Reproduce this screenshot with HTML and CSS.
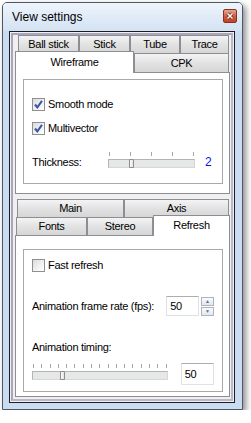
FILE: index.html
```html
<!DOCTYPE html>
<html lang="en">
<head>
    <meta charset="UTF-8">
    <title>View settings</title>
    <link rel="stylesheet" href="styles.css">
</head>
<body>
    <div class="window">
        <div class="titlebar">
            <span class="title">View settings</span>
            <span class="close">
                <svg width="14" height="14" viewBox="0 0 14 14">
                    <path d="M4.5 4.5 L9.5 9.5 M9.5 4.5 L4.5 9.5" stroke="#6b1c10" stroke-width="3"/>
                    <path d="M4.5 4.5 L9.5 9.5 M9.5 4.5 L4.5 9.5" stroke="#fff" stroke-width="1.6"/>
                </svg>
            </span>
        </div>
        <div class="client">
            <div class="inset">

                <!-- upper tab control -->
                <div class="tabctl">
                    <div class="tabrow back upper">
                        <div class="tab w-ball">Ball stick</div>
                        <div class="tab w-stick">Stick</div>
                        <div class="tab w-tube">Tube</div>
                        <div class="tab w-trace">Trace</div>
                    </div>
                    <div class="tabrow front upper">
                        <div class="tab selected w-wire">Wireframe</div>
                        <div class="tab w-cpk">CPK</div>
                    </div>
                    <div class="panel panel-top">
                        <div class="group group-top">
                            <div class="check-row first">
                                <span class="checkbox">
                                    <svg width="11" height="11" viewBox="0 0 11 11"><path d="M2 5.5 L4.3 8.3 L9 1.8" stroke="#3a55a5" stroke-width="2" fill="none"/></svg>
                                </span>
                                <span>Smooth mode</span>
                            </div>
                            <div class="check-row second">
                                <span class="checkbox">
                                    <svg width="11" height="11" viewBox="0 0 11 11"><path d="M2 5.5 L4.3 8.3 L9 1.8" stroke="#3a55a5" stroke-width="2" fill="none"/></svg>
                                </span>
                                <span>Multivector</span>
                            </div>
                            <div class="slider-row thick-row">
                                <span class="label thick-label">Thickness:</span>
                                <div class="slider thick-slider">
                                    <div class="ticks">
                                        <i></i><i></i><i></i><i></i><i></i>
                                    </div>
                                    <div class="track"><span class="thumb thumb-thick"></span></div>
                                </div>
                                <span class="value">2</span>
                            </div>
                        </div>
                    </div>
                </div>

                <!-- lower tab control -->
                <div class="tabctl lower-ctl">
                    <div class="tabrow back lower">
                        <div class="tab w-main">Main</div>
                        <div class="tab w-axis">Axis</div>
                    </div>
                    <div class="tabrow front lower">
                        <div class="tab w-fonts">Fonts</div>
                        <div class="tab w-stereo">Stereo</div>
                        <div class="tab selected w-refresh">Refresh</div>
                    </div>
                    <div class="panel panel-bottom">
                        <div class="group group-bottom">
                            <div class="check-row fast">
                                <span class="checkbox"></span>
                                <span>Fast refresh</span>
                            </div>
                            <div class="rate-row">
                                <span class="label rate-label">Animation frame rate (fps):</span>
                                <span class="textbox spin-box">50</span>
                                <span class="spin">
                                    <span class="spin-btn">&#9650;</span>
                                    <span class="spin-btn">&#9660;</span>
                                </span>
                            </div>
                            <div class="label timing-label">Animation timing:</div>
                            <div class="timing-row">
                                <div class="slider timing-slider">
                                    <div class="ticks">
                                        <i></i><i></i><i></i><i></i><i></i><i></i><i></i><i></i><i></i>
                                        <i></i><i></i><i></i><i></i><i></i><i></i><i></i><i></i>
                                    </div>
                                    <div class="track"><span class="thumb thumb-timing"></span></div>
                                </div>
                                <span class="textbox timing-box">50</span>
                            </div>
                        </div>
                    </div>
                </div>

            </div>
        </div>
    </div>
</body>
</html>
```

FILE: styles.css
```css
* {
    box-sizing: border-box;
}
body {
    margin: 0;
    background: #fff;
    font-family: "Liberation Sans", Arial, sans-serif;
    font-size: 11px;
    letter-spacing: -0.3px;
    color: #000;
}
.window {
    margin: 2px 0 0 2px;
    width: 241px;
    height: 408px;
    border: 1px solid #4c5866;
    border-radius: 5px 5px 0 0;
    background: #c9dcf2;
    box-shadow: 3px 3px 6px rgba(0, 0, 0, 0.45);
    display: flex;
    flex-direction: column;
}
.titlebar {
    height: 28px;
    padding: 0 5px 0 9px;
    display: flex;
    justify-content: space-between;
    border-radius: 4px 4px 0 0;
    background: linear-gradient(#eef4fb, #d3e2f3);
}
.title {
    font-size: 12px;
    letter-spacing: 0;
    line-height: 28px;
}
.close {
    margin-top: 6px;
    width: 14px;
    height: 14px;
    border: 1px solid #8a3020;
    border-radius: 2px;
    background: linear-gradient(#e8a590, #cf5a3e 55%, #c04428);
    display: flex;
}
.close svg {
    margin: -1px;
}
.client {
    flex: 1;
    margin: 0 7px 6px 6px;
    border: 1px solid #1e1e1e;
    background: #f0f0f0;
    padding: 1px;
}
.inset {
    height: 100%;
    border: 2px solid;
    border-color: #a8a5bd #bab7cc #bab7cc #a8a5bd;
    padding: 0 1px 2px 2px;
}

/* tabs */
.tabrow {
    display: flex;
}
.tabrow.back.upper {
    height: 18px;
    padding-left: 3px;
}
.tabrow.front.upper {
    height: 19px;
}
.tabrow.back.lower {
    height: 18px;
    padding-left: 2px;
}
.tabrow.front.lower {
    height: 18px;
    padding-left: 1px;
}
.tab {
    border: 1px solid #8c8e94;
    border-bottom: none;
    background: linear-gradient(#f4f4f4, #e2e2e2 50%, #d6d6d6);
    display: flex;
    align-items: center;
    justify-content: center;
    padding-bottom: 1px;
}
.tab.selected {
    position: relative;
    z-index: 1;
    background: #fff;
    margin-top: -2px;
    margin-bottom: -1px;
    padding-bottom: 2px;
}
.w-ball { width: 61px; }
.w-stick { width: 51px; }
.w-tube { width: 50px; }
.w-trace { width: 49px; }
.w-wire { width: 119px; }
.w-cpk { width: 95px; }
.w-main { width: 107px; }
.w-axis { width: 105px; }
.w-fonts { width: 71px; }
.w-stereo { width: 66px; }
.w-refresh { width: 77px; }

.panel {
    border: 1px solid #8c8e94;
    background: #fff;
}
.panel-top {
    height: 122px;
    padding: 6px 6px 0 7px;
}
.lower-ctl {
    margin-top: 5px;
}
.panel-bottom {
    height: 162px;
    padding: 13px 6px 0 7px;
}
.group {
    border: 1px solid #a9a9a9;
    padding: 0 8px;
}
.group-top {
    height: 105px;
}
.group-bottom {
    height: 143px;
}

/* checkboxes */
.check-row {
    display: flex;
    align-items: center;
    height: 14px;
    gap: 3px;
}
.check-row.first {
    margin-top: 17px;
}
.check-row.second {
    margin-top: 10px;
}
.check-row.fast {
    margin-top: 8px;
}
.checkbox {
    width: 13px;
    height: 13px;
    border: 1px solid #8f8f8f;
    background: linear-gradient(135deg, #dcdcdc, #f6f6f6 70%, #fff);
    display: flex;
    align-items: center;
    justify-content: center;
}

/* sliders */
.label {
    line-height: 12px;
}
.slider-row {
    display: flex;
    align-items: flex-end;
    margin-top: 17px;
}
.thick-label {
    width: 76px;
}
.slider {
    display: flex;
    flex-direction: column;
}
.ticks {
    display: flex;
    justify-content: space-between;
    height: 4px;
    margin-bottom: 3px;
    padding: 0 1px;
}
.ticks i {
    width: 1px;
    background: #a6a6a6;
}
.track {
    position: relative;
    height: 9px;
    border: 1px solid #b4b4b4;
    border-right-color: #d6d6d6;
    border-bottom-color: #d6d6d6;
    background: #e6e8e8;
}
.thumb {
    position: absolute;
    top: -1px;
    width: 5px;
    height: 9px;
    border: 1px solid #8c8c8c;
    border-radius: 1px 1px 0 0;
    background: linear-gradient(90deg, #fdfdfd, #e2e2e2);
}
.thick-slider {
    width: 87px;
}
.thumb-thick {
    left: 20px;
}
.value {
    margin-left: 10px;
    color: #0018e0;
    font-size: 12px;
    line-height: 12px;
}

/* numeric fields */
.rate-row {
    display: flex;
    align-items: center;
    margin-top: 24px;
    height: 20px;
}
.rate-label {
    width: 135px;
    padding-left: 0;
}
.textbox {
    border: 1px solid #dde2e8;
    border-top-color: #abadb3;
    background: #fff;
    padding-left: 3px;
    display: flex;
    align-items: center;
}
.spin-box {
    width: 33px;
    height: 20px;
}
.spin {
    margin-left: 2px;
    display: flex;
    flex-direction: column;
    gap: 1px;
}
.spin-btn {
    width: 13px;
    height: 9px;
    border: 1px solid #aeb4bd;
    background: linear-gradient(#fafbfc, #e3e7ec);
    color: #5a6fa0;
    font-size: 5px;
    line-height: 7px;
    text-align: center;
    letter-spacing: 0;
}
.timing-label {
    margin-top: 25px;
}
.timing-row {
    display: flex;
    margin-top: 10px;
    gap: 13px;
}
.timing-slider {
    width: 139px;
    padding-top: 1px;
}
.thumb-timing {
    left: 27px;
}
.timing-box {
    width: 34px;
    height: 22px;
}
```
